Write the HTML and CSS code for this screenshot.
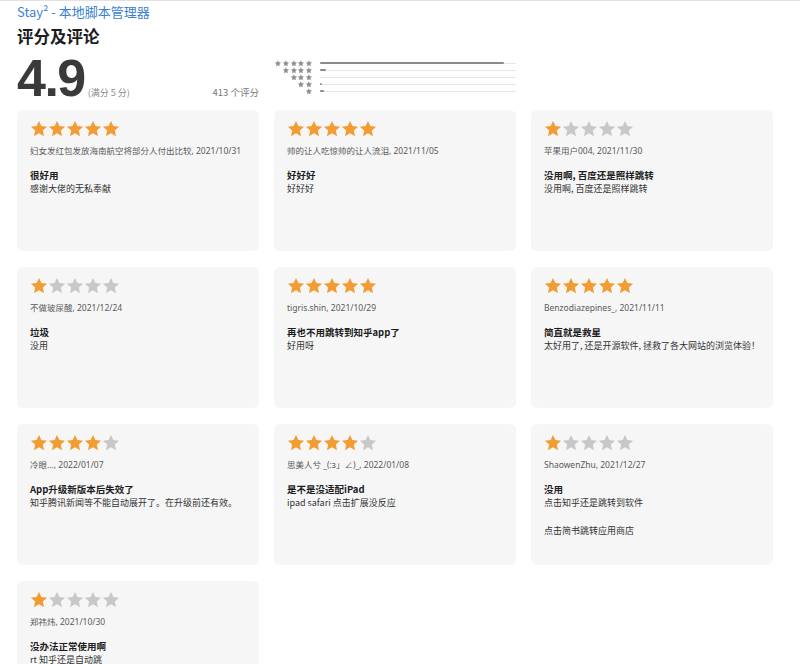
FILE: index.html
```html
<!DOCTYPE html>
<html lang="zh-CN">
<head>
  <meta charset="UTF-8" />
  <meta name="viewport" content="width=device-width, initial-scale=1.0" />
  <title>Stay² - 评分及评论</title>
  <link rel="stylesheet" href="styles.css">
</head>
<body>
  <svg width="0" height="0" style="position:absolute">
    <defs>
      <symbol id="star" viewBox="0 0 24 24">
        <polygon points="12,1.2 15.2,8.1 22.8,8.9 17.1,14 18.7,21.5 12,17.6 5.3,21.5 6.9,14 1.2,8.9 8.8,8.1" />
      </symbol>
    </defs>
  </svg>

  <div class="page">
    <a class="app-link" href="#">Stay² - 本地脚本管理器</a>
    <h2 class="section-title">评分及评论</h2>

    <div class="summary">
      <div class="score">
        <span class="score-num">4.9</span>
        <span class="score-max">(满分 5 分)</span>
        <span class="score-count">413 个评分</span>
      </div>
      <div class="histogram">
        <div class="hist-row">
          <div class="hist-stars"><svg><use href="#star"/></svg><svg><use href="#star"/></svg><svg><use href="#star"/></svg><svg><use href="#star"/></svg><svg><use href="#star"/></svg></div>
          <div class="track"><div class="fill" style="width:94%"></div></div>
        </div>
        <div class="hist-row">
          <div class="hist-stars"><svg><use href="#star"/></svg><svg><use href="#star"/></svg><svg><use href="#star"/></svg><svg><use href="#star"/></svg></div>
          <div class="track"><div class="fill" style="width:3%"></div></div>
        </div>
        <div class="hist-row">
          <div class="hist-stars"><svg><use href="#star"/></svg><svg><use href="#star"/></svg><svg><use href="#star"/></svg></div>
          <div class="track"><div class="fill" style="width:0%"></div></div>
        </div>
        <div class="hist-row">
          <div class="hist-stars"><svg><use href="#star"/></svg><svg><use href="#star"/></svg></div>
          <div class="track"><div class="fill" style="width:1%"></div></div>
        </div>
        <div class="hist-row">
          <div class="hist-stars"><svg><use href="#star"/></svg></div>
          <div class="track"><div class="fill" style="width:2%"></div></div>
        </div>
      </div>
    </div>

    <div class="reviews">
      <div class="card">
        <div class="stars r5"><svg><use href="#star"/></svg><svg><use href="#star"/></svg><svg><use href="#star"/></svg><svg><use href="#star"/></svg><svg><use href="#star"/></svg></div>
        <p class="meta">妇女发红包发放海南航空将部分人付出比较, 2021/10/31</p>
        <p class="title">很好用</p>
        <p class="body">感谢大佬的无私奉献</p>
      </div>
      <div class="card">
        <div class="stars r5"><svg><use href="#star"/></svg><svg><use href="#star"/></svg><svg><use href="#star"/></svg><svg><use href="#star"/></svg><svg><use href="#star"/></svg></div>
        <p class="meta">帅的让人吃惊帅的让人流泪, 2021/11/05</p>
        <p class="title">好好好</p>
        <p class="body">好好好</p>
      </div>
      <div class="card">
        <div class="stars r1"><svg><use href="#star"/></svg><svg><use href="#star"/></svg><svg><use href="#star"/></svg><svg><use href="#star"/></svg><svg><use href="#star"/></svg></div>
        <p class="meta">苹果用户004, 2021/11/30</p>
        <p class="title">没用啊, 百度还是照样跳转</p>
        <p class="body">没用啊, 百度还是照样跳转</p>
      </div>

      <div class="card">
        <div class="stars r1"><svg><use href="#star"/></svg><svg><use href="#star"/></svg><svg><use href="#star"/></svg><svg><use href="#star"/></svg><svg><use href="#star"/></svg></div>
        <p class="meta">不做玻尿酸, 2021/12/24</p>
        <p class="title">垃圾</p>
        <p class="body">没用</p>
      </div>
      <div class="card">
        <div class="stars r5"><svg><use href="#star"/></svg><svg><use href="#star"/></svg><svg><use href="#star"/></svg><svg><use href="#star"/></svg><svg><use href="#star"/></svg></div>
        <p class="meta">tigris.shin, 2021/10/29</p>
        <p class="title">再也不用跳转到知乎app了</p>
        <p class="body">好用呀</p>
      </div>
      <div class="card">
        <div class="stars r5"><svg><use href="#star"/></svg><svg><use href="#star"/></svg><svg><use href="#star"/></svg><svg><use href="#star"/></svg><svg><use href="#star"/></svg></div>
        <p class="meta">Benzodiazepines_, 2021/11/11</p>
        <p class="title">简直就是救星</p>
        <p class="body">太好用了, 还是开源软件, 拯救了各大网站的浏览体验！</p>
      </div>

      <div class="card">
        <div class="stars r4"><svg><use href="#star"/></svg><svg><use href="#star"/></svg><svg><use href="#star"/></svg><svg><use href="#star"/></svg><svg><use href="#star"/></svg></div>
        <p class="meta">冷眼..., 2022/01/07</p>
        <p class="title">App升级新版本后失效了</p>
        <p class="body">知乎腾讯新闻等不能自动展开了。在升级前还有效。</p>
      </div>
      <div class="card">
        <div class="stars r4"><svg><use href="#star"/></svg><svg><use href="#star"/></svg><svg><use href="#star"/></svg><svg><use href="#star"/></svg><svg><use href="#star"/></svg></div>
        <p class="meta">思美人兮 _(:з」∠)_, 2022/01/08</p>
        <p class="title">是不是没适配iPad</p>
        <p class="body">ipad safari 点击扩展没反应</p>
      </div>
      <div class="card">
        <div class="stars r1"><svg><use href="#star"/></svg><svg><use href="#star"/></svg><svg><use href="#star"/></svg><svg><use href="#star"/></svg><svg><use href="#star"/></svg></div>
        <p class="meta">ShaowenZhu, 2021/12/27</p>
        <p class="title">没用</p>
        <p class="body">点击知乎还是跳转到软件<br><br>点击简书跳转应用商店</p>
      </div>

      <div class="card">
        <div class="stars r1"><svg><use href="#star"/></svg><svg><use href="#star"/></svg><svg><use href="#star"/></svg><svg><use href="#star"/></svg><svg><use href="#star"/></svg></div>
        <p class="meta">郑祎炜, 2021/10/30</p>
        <p class="title">没办法正常使用啊</p>
        <p class="body">rt 知乎还是自动跳</p>
      </div>
    </div>
  </div>
</body>
</html>
```

FILE: styles.css
```css
* {
  box-sizing: border-box;
  margin: 0;
  padding: 0;
}

body {
  font-family: "Noto Sans CJK SC", "Noto Sans", sans-serif;
  background: #fff;
  color: #222;
  border-top: 1px solid #e2e2e2;
}

.page {
  width: 774px;
  padding: 1px 0 40px 17px;
}

.app-link {
  display: block;
  font-size: 13px;
  line-height: 20px;
  color: #3b7fd0;
  text-decoration: none;
}

.section-title {
  margin-top: 3px;
  font-size: 16.5px;
  line-height: 22px;
  font-weight: 700;
  color: #1d1d1f;
}

/* summary: big score + histogram */
.summary {
  margin-top: 2px;
  display: flex;
  gap: 15px;
}

.score {
  width: 242px;
  display: flex;
  align-items: baseline;
}

.score-num {
  font-family: "Liberation Sans", sans-serif;
  font-size: 52px;
  line-height: 58px;
  font-weight: 700;
  letter-spacing: -1.5px;
  color: #3a3a3c;
}

.score-max {
  margin-left: 3px;
  font-size: 9px;
  color: #8a8a8a;
}

.score-count {
  margin-left: auto;
  font-size: 9.5px;
  color: #777;
}

.histogram {
  width: 242px;
  padding-top: 11px;
}

.hist-row {
  display: flex;
  align-items: center;
  height: 7px;
}

.hist-stars {
  width: 39px;
  display: flex;
  justify-content: flex-end;
}

.hist-stars svg {
  width: 7.8px;
  height: 7px;
  fill: #8e8e8e;
}

.track {
  flex: 1;
  margin-left: 7px;
  height: 1px;
  background: #e6e6e6;
  position: relative;
}

.fill {
  position: absolute;
  left: 0;
  top: -1px;
  height: 2px;
  background: #8a8a8a;
  border-radius: 1px;
}

/* review cards */
.reviews {
  margin-top: 3px;
  display: grid;
  grid-template-columns: repeat(3, 242px);
  column-gap: 15px;
  row-gap: 16px;
}

.card {
  height: 141px;
  padding: 10px 13px;
  background: #f6f6f6;
  border-radius: 6px;
}

.stars {
  display: flex;
  height: 18px;
}

.stars svg {
  width: 18px;
  height: 18px;
  fill: #c8c8c8;
}

.r5 svg:nth-child(-n+5),
.r4 svg:nth-child(-n+4),
.r1 svg:nth-child(-n+1) {
  fill: #f39c33;
}

.meta {
  margin-top: 6px;
  font-family: "Noto Sans", "Noto Sans CJK SC", sans-serif;
  font-size: 8.5px;
  line-height: 14px;
  color: #5a5a5a;
  white-space: nowrap;
}

.title {
  margin-top: 10px;
  font-size: 9.5px;
  line-height: 14px;
  font-weight: 700;
  color: #1d1d1f;
  white-space: nowrap;
}

.body {
  font-size: 9px;
  line-height: 14px;
  color: #333;
  white-space: nowrap;
}
```
